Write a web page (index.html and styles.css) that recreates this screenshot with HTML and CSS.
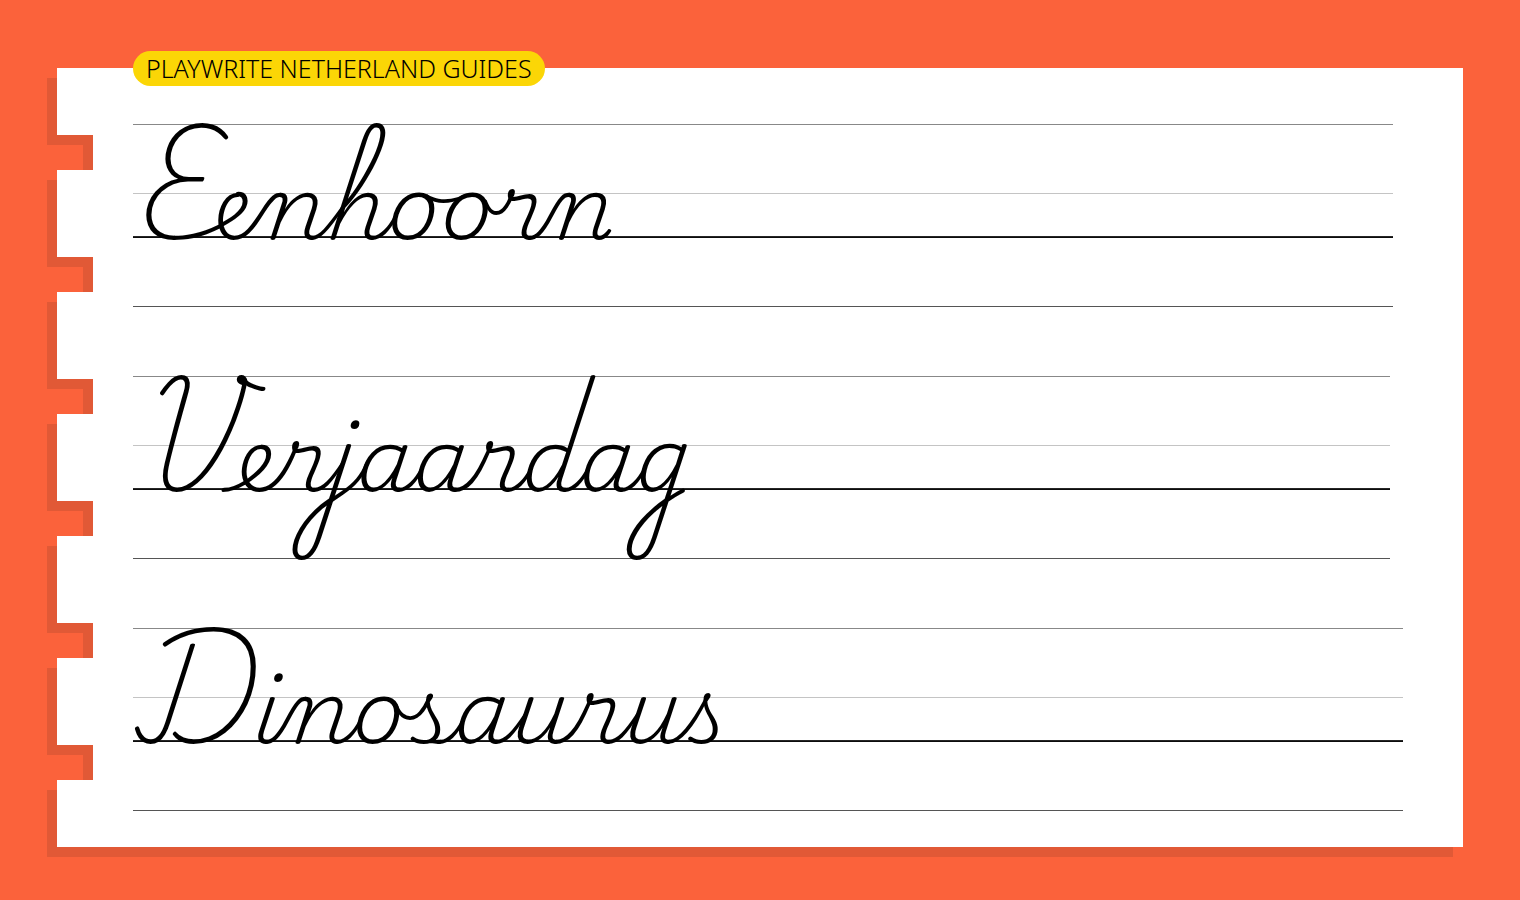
FILE: index.html
```html
<!DOCTYPE html>
<html lang="nl">
<head>
<meta charset="utf-8">
<title>Playwrite Netherland Guides</title>
<link rel="stylesheet" href="styles.css">
</head>
<body>
<main class="sheet">
<svg class="edge" viewBox="0 0 46 789" aria-hidden="true">
<path class="edge-shade" d="M10 10H0V77H36V112H0V199H36V234H0V321H36V356H0V443H36V478H0V565H36V600H0V687H36V722H0V789H46V10Z"/>
<path class="edge-paper" d="M46 0H10V67H46V102H10V189H46V224H10V311H46V346H10V433H46V468H10V555H46V590H10V677H46V712H10V779H46Z"/>
</svg>
<section class="paper">
<h1 class="tag">PLAYWRITE NETHERLAND GUIDES</h1>
<p class="row row-mid">Eenhoorn</p>
<p class="row row-short">Verjaardag</p>
<p class="row">Dinosaurus</p>
</section>
</main>
</body>
</html>
```
FILE: styles.css
```css
* { box-sizing: border-box; }
body {
  margin: 0;
  min-height: 100vh;
  padding: 68px 57px 43px 47px;
  background: #fb623b;
  color: #000;
}
.sheet { display: flex; align-items: flex-start; }
.edge { flex: none; width: 46px; height: 789px; }
.edge-shade { fill: #e15936; }
.edge-paper { fill: #fff; }
.paper {
  position: relative;
  flex: 1;
  min-width: 0;
  padding: 1px 60px 22px 40px;
  background: #fff;
}
.paper::after {
  content: "";
  position: absolute;
  top: 100%;
  left: 0;
  right: 10px;
  height: 10px;
  background: #e15936;
}
.tag {
  position: absolute;
  top: -17px;
  left: 40px;
  margin: 0;
  padding: 0 13px;
  border-radius: 18px;
  background: #fbd606;
  font: 350 25px/35px "Noto Sans", sans-serif;
  white-space: nowrap;
}
/* ascender, x-height, baseline and descender guides */
.row {
  margin: 0;
  background:
    linear-gradient(#888, #888) 0 55px / 100% 1px no-repeat,
    linear-gradient(#c4c4c4, #c4c4c4) 0 124px / 100% 1px no-repeat,
    linear-gradient(#333, #000) 0 167px / 100% 2px no-repeat,
    linear-gradient(#555, #555) 0 237px / 100% 1px no-repeat;
  font: 200 89px/252px "Playwrite NL", "Playwrite NL Guides", cursive;
}
.row-mid { margin-right: 10px; }
.row-short { margin-right: 13px; }
```
